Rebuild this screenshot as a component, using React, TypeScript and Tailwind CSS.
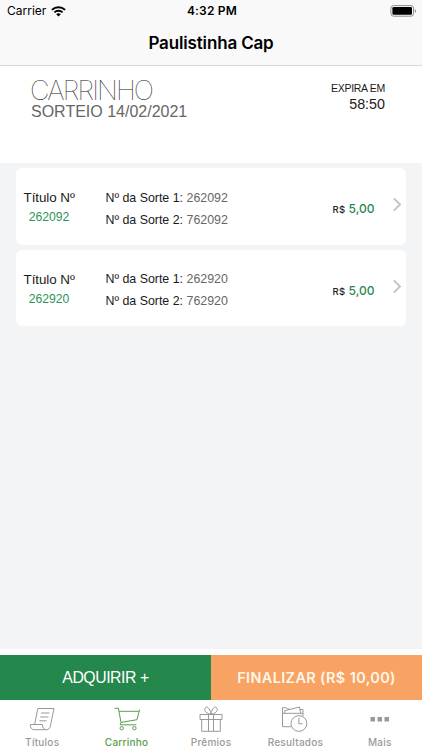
import type { ReactNode } from "react";

type Ticket = { id: string; luckyOne: string; luckyTwo: string; price: string };

const tickets: Ticket[] = [
  { id: "262092", luckyOne: "262092", luckyTwo: "762092", price: "5,00" },
  { id: "262920", luckyOne: "262920", luckyTwo: "762920", price: "5,00" },
];

function StatusBar() {
  return (
    <div className="flex h-[22px] items-center justify-between pl-[7px] pr-[5px] text-black">
      <div className="flex w-[100px] items-center gap-[5px]">
        <span className="text-[12px] leading-[22px]">Carrier</span>
        <svg width="15" height="11" viewBox="0 0 15 11" fill="none" stroke="black">
          <path d="M0.9 3.9C4.6 0.2 10.4 0.2 14.1 3.9" strokeWidth="2" />
          <path d="M3.4 6.4C5.7 4.2 9.3 4.2 11.6 6.4" strokeWidth="1.9" />
          <path d="M7.5 10.5L5.2 8.2C6.5 7 8.5 7 9.8 8.2Z" fill="black" stroke="none" />
        </svg>
      </div>
      <span className="text-[12px] leading-[22px] font-semibold tracking-[0.2px]">4:32 PM</span>
      <div className="flex w-[100px] justify-end">
        <svg width="27" height="12" viewBox="0 0 27 12">
          <rect x="0.9" y="0.6" width="22.6" height="10.6" rx="2.6" fill="none" stroke="#8c8c8c" />
          <rect x="2.4" y="2.1" width="19.6" height="7.6" rx="1.2" fill="black" />
          <path d="M24.8 4v4c1.6-.7 1.6-3.3 0-4Z" fill="#8c8c8c" />
        </svg>
      </div>
    </div>
  );
}

function TicketCard({ ticket }: { ticket: Ticket }) {
  return (
    <article className="flex h-[76.5px] rounded-[6px] bg-white pl-[8px] pr-[3px]">
      <div className="w-[51px] pt-[20px] text-center">
        <p className="text-[13.4px] leading-[19px] tracking-[-0.05px] whitespace-nowrap text-[#1a1a1a]">Título Nº</p>
        <p className="text-[12.2px] leading-[20px] text-[#2f9358]">{ticket.id}</p>
      </div>
      <div className="ml-[31px] flex-1 pt-[18.5px] text-[12.4px] leading-[22px] whitespace-nowrap text-[#1a1a1a]">
        <p>
          Nº da Sorte 1: <span className="text-[#666666]">{ticket.luckyOne}</span>
        </p>
        <p>
          Nº da Sorte 2: <span className="text-[#666666]">{ticket.luckyTwo}</span>
        </p>
      </div>
      <p className="pt-[31px] font-['Inter'] text-[12px] leading-[20px] font-medium text-[#2b8752]">
        <span className="text-[9.5px] tracking-[0.3px] text-[#222222]">R$</span> {ticket.price}
      </p>
      <svg className="mt-[29px] ml-[18px]" width="10" height="15" viewBox="0 0 10 15" fill="none">
        <path d="M0.9 1.5L7.1 7.5L0.9 13.5" stroke="#c3c3c8" strokeWidth="1.8" />
      </svg>
    </article>
  );
}

function Tab({ label, active, children }: { label: string; active?: boolean; children: ReactNode }) {
  return (
    <button
      type="button"
      className={`flex flex-1 flex-col items-center pt-[4px] ${active ? "text-[#5a9e50]" : "text-[#999999]"}`}
    >
      <svg width="32" height="30" viewBox="0 0 32 30" fill="none" stroke="currentColor" strokeWidth="1">
        {children}
      </svg>
      <span className="text-[10px] leading-[16px] font-medium tracking-[0.25px]">{label}</span>
    </button>
  );
}

export default function App() {
  return (
    <div className="flex h-[750px] w-[422px] flex-col overflow-hidden bg-white font-['Liberation_Sans',sans-serif]">
      <header className="h-[66px] border-b border-[#d9d9d9] bg-[#f9f9f9] font-['Inter',sans-serif]">
        <StatusBar />
        <h1 className="text-center text-[17px] leading-[43px] font-semibold tracking-[-0.15px] text-black">
          Paulistinha Cap
        </h1>
      </header>

      <section className="flex h-[97px] justify-between pt-[11px] pr-[37px] pl-[31px]">
        <div className="whitespace-nowrap text-[#666666]">
          <h2 className="-ml-px font-['Inter'] text-[27px] leading-[28px] font-thin tracking-[-1.9px] text-[#222222]">
            CARRINHO
          </h2>
          <p className="text-[16px] leading-[14px]">SORTEIO 14/02/2021</p>
        </div>
        <div className="text-right text-[#1a1a1a]">
          <p className="text-[10.5px] leading-[22px] tracking-[-0.3px]">EXPIRA EM</p>
          <p className="text-[14.3px] leading-[11px]">58:50</p>
        </div>
      </section>

      <main className="flex flex-1 flex-col gap-[5px] bg-[#f2f4f6] pt-[5px] pr-[16.5px] pl-[15.5px]">
        {tickets.map((ticket) => (
          <TicketCard key={ticket.id} ticket={ticket} />
        ))}
      </main>

      <div className="grid h-[51px] grid-cols-2 border-t-[6px] border-white text-white">
        <button type="button" className="bg-[#24874c] text-[15.8px] tracking-[-0.45px]">
          ADQUIRIR +
        </button>
        <button type="button" className="bg-[#f8a364] font-['Inter'] text-[14.5px] font-semibold tracking-[0.35px] text-[#fff6e8]">
          FINALIZAR (R$ 10,00)
        </button>
      </div>

      <nav className="flex h-[50px] font-['Inter',sans-serif]">
        <Tab label="Títulos">
          <path d="M11.8 4.5H28L24.3 22.2C23.8 24.5 22.5 25.7 20.5 25.7H8C5.5 25.7 4.2 23.5 4.4 20.5H16.4C16.4 23.8 18 25.7 20.5 25.7M11.8 4.5L8.6 20.5M15 9H23.5M14.2 13H22.5M13.5 16.8H20.5" />
        </Tab>
        <Tab label="Carrinho" active>
          <path d="M3.5 4.3H7.4L10 18.4L26 15.7L28.6 5.6M8 7.3H28M10 18.4L9.2 20.8H25.4" />
          <circle cx="10.7" cy="24.2" r="1.7" />
          <circle cx="23.4" cy="24.2" r="1.7" />
        </Tab>
        <Tab label="Prêmios">
          <path d="M5 10.5H27V15.5H5ZM6.7 15.5V27.3H25.3V15.5M13.5 10.5V27.3M18.5 10.5V27.3M16 10.2C12 9.8 8.8 7.2 10 4.3C11.7 1.2 15.3 4.5 16 10.2C16.7 4.5 20.3 1.2 22 4.3C23.2 7.2 20 9.8 16 10.2" />
        </Tab>
        <Tab label="Resultados">
          <path d="M12 22.7H3.5V3.7H7.5L8.5 5H10.5M3.5 9.3H24V12M5.7 9.2V6.7L20.5 3L21.7 9.2M21 5.5H24V9.3" />
          <circle cx="19.9" cy="19.5" r="7.9" />
          <path d="M19.9 13.8V19.8H23.6" />
        </Tab>
        <Tab label="Mais">
          <path d="M6.5 13h4.5v4.5H6.5zM13.5 13h4.5v4.5H13.5zM20.5 13h4.5v4.5H20.5z" fill="currentColor" stroke="none" />
        </Tab>
      </nav>
    </div>
  );
}
